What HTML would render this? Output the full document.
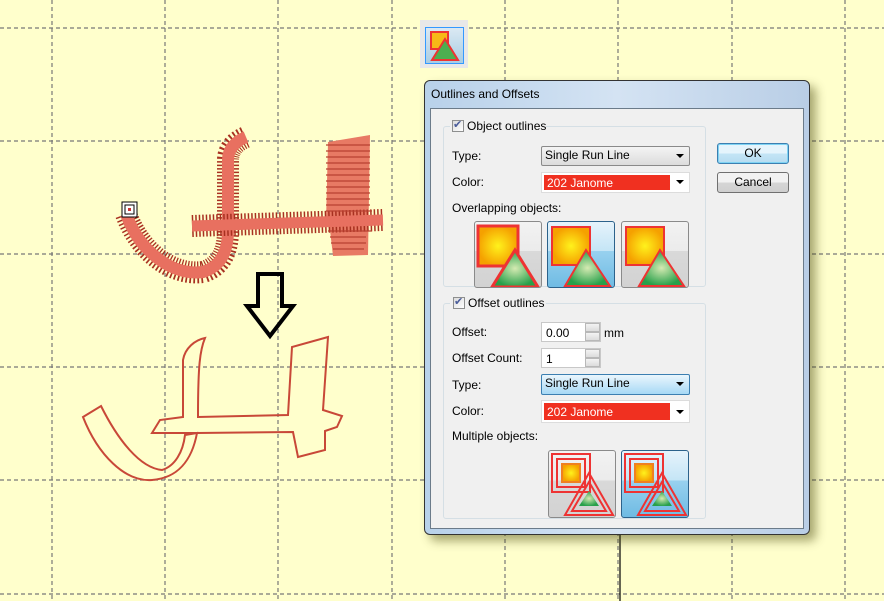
<!DOCTYPE html>
<html><head><meta charset="utf-8"><style>
*{margin:0;padding:0;box-sizing:border-box}
body{width:884px;height:601px;overflow:hidden;background:#ffffcc;position:relative;font-family:"Liberation Sans",sans-serif;font-size:12px;color:#000}
.a{position:absolute}
.lbl{position:absolute;font-size:12px;line-height:14px}
.combo{position:absolute;border:1px solid #8a8a8a;border-radius:2px;background:linear-gradient(#f4f4f4,#dcdcdc);font-size:12px;line-height:17px;padding-left:3px}
.combo.b{background:linear-gradient(#eaf6fd,#a7d9f5);border-color:#3c7fb1}
.arr{position:absolute;right:5px;top:7px;width:0;height:0;border-left:4px solid transparent;border-right:4px solid transparent;border-top:4px solid #000}
.ccombo{position:absolute;background:#fff;border:1px solid #dcdcdc}
.red{position:absolute;left:2px;top:2px;bottom:2px;width:126px;background:#f03020;color:#fff;font-size:12px;line-height:16px;padding-left:3px}
.btn{position:absolute;border:1px solid #707070;border-radius:3px;background:linear-gradient(#f2f2f2 50%,#d6d6d6 50%,#cfcfcf);text-align:center;font-size:12px;line-height:18px}
.ib{position:absolute;border:1px solid #8a8a8a;border-radius:3px;background:linear-gradient(#f2f2f2 0,#ebebeb 45%,#d9d9d9 45%,#d2d2d2);overflow:hidden}
.ib.sel{border-color:#2c628b;background:linear-gradient(#e6f3fb 0,#c4e5f6 45%,#98d1ef 45%,#6fbbe3)}
.spin{position:absolute;background:#fff;border:1px solid #c8c8c8}
.sp{position:absolute;right:0;width:15px;height:50%;border:1px solid #b8b8b8;background:linear-gradient(#f3f3f3,#dcdcdc)}
.chk{position:absolute;width:12px;height:12px;border:1px solid #8e8f8f;background:linear-gradient(135deg,#dcdcdc,#fff)}
</style></head><body>
<svg class="a" style="left:0;top:0" width="884" height="601">
<g stroke="#777" stroke-width="1.2" stroke-dasharray="4 3" fill="none">
<line x1="52" y1="0" x2="52" y2="601"/><line x1="165" y1="0" x2="165" y2="601"/><line x1="278" y1="0" x2="278" y2="601"/><line x1="392" y1="0" x2="392" y2="601"/><line x1="505" y1="0" x2="505" y2="601"/><line x1="618" y1="0" x2="618" y2="601"/><line x1="732" y1="0" x2="732" y2="601"/><line x1="845" y1="0" x2="845" y2="601"/>
<line x1="0" y1="28" x2="884" y2="28"/><line x1="0" y1="141" x2="884" y2="141"/><line x1="0" y1="254" x2="884" y2="254"/><line x1="0" y1="367" x2="884" y2="367"/><line x1="0" y1="480" x2="884" y2="480"/><line x1="0" y1="594" x2="884" y2="594"/>
</g>
<line x1="620" y1="530" x2="620" y2="601" stroke="#000" stroke-width="1.2"/>
<!-- stitched top shape -->
<polygon points="328,142 370,135 368,255 333,256 330,230 326,222" fill="#e87a64"/>
<g fill="none" stroke-linecap="butt">
<path d="M126,214 C140,252 172,276 203,272 C222,266 228,250 228,230 L228,160 C228,150 234,142 246,137" stroke="#a83020" stroke-width="22" stroke-dasharray="1.5 2"/>
<path d="M126,214 C140,252 172,276 203,272 C222,266 228,250 228,230 L228,160 C228,150 234,142 246,137" stroke="#e87060" stroke-width="12"/>
<path d="M192,226 L383,220" stroke="#a83020" stroke-width="22" stroke-dasharray="1.5 2"/>
<path d="M192,226 L383,220" stroke="#e87060" stroke-width="11"/>
</g>
<g stroke="#b84030" stroke-width="1.2">
<path d="M326,145 H370 M326,151 H370 M326,157 H370 M326,163 H370 M326,169 H370 M326,175 H370 M326,181 H370 M326,187 H370 M326,193 H370 M326,199 H370 M326,205 H370 M326,211 H372 M328,231 H372 M330,237 H366 M331,243 H366 M333,249 H364"/>
</g>
<rect x="122" y="202" width="15" height="15" fill="#fff" stroke="#000"/><rect x="125" y="205" width="9" height="9" fill="none" stroke="#000"/><rect x="128" y="208" width="3" height="3" fill="#c33"/>
<!-- arrow -->
<path d="M258,274 H282 V306 H293 L270,336 L247,306 H258 Z" fill="none" stroke="#000" stroke-width="4" stroke-linejoin="miter"/>
<!-- outline shape -->
<path d="M83,417 L101,406 C118,440 140,468 162,470 C175,466 183,452 185,435 L197,433 C192,460 178,478 152,480 C125,482 98,455 83,417 Z M152,433 L160,420 L183,417 L183,360 C185,348 195,340 205,338 C200,350 198,365 198,417 L288,415 L292,347 L328,337 L323,410 L342,416 L337,427 L325,431 L325,450 L298,457 L293,432 L197,433 Z" fill="none" stroke="#c84838" stroke-width="2"/>
</svg>
<!-- small toolbar icon -->
<div class="a" style="left:420px;top:20px;width:48px;height:48px;background:#e8e8e8"></div>
<div class="a" style="left:425px;top:27px;width:39px;height:37px;border:1px solid #3399ff;background:linear-gradient(#dbe9f3,#a9cde3)"></div>
<svg class="a" style="left:428px;top:30px" width="34" height="32"><rect x="3" y="2" width="17" height="17" fill="#f7b917" stroke="#e33" stroke-width="2"/><polygon points="17,9 30,30 4,30" fill="#4caf50" stroke="#e33" stroke-width="2"/></svg>
<!-- dialog -->
<div class="a" style="left:424px;top:80px;width:386px;height:455px;border:1px solid #333;border-radius:6px;background:linear-gradient(90deg,#b8d1ea,#d4e3f3 50%,#b9cee6);box-shadow:6px 6px 10px rgba(60,60,0,.45)"></div>
<div class="lbl" style="left:431px;top:87px">Outlines and Offsets</div>
<div class="a" style="left:430px;top:108px;width:374px;height:421px;background:#f0f0f0;border:1px solid #6b7b8a"></div>
<!-- group 1 -->
<div class="a" style="left:443px;top:126px;width:263px;height:161px;border:1px solid #d5dfe5;border-radius:3px"></div>
<div class="a" style="left:450px;top:118px;width:96px;height:16px;background:#f0f0f0"></div>
<div class="chk" style="left:452px;top:120px"></div><div class="lbl" style="left:453px;top:118px;color:#4a5c9a;font-size:11px">✔</div>
<div class="lbl" style="left:467px;top:119px">Object outlines</div>
<div class="lbl" style="left:452px;top:149px">Type:</div>
<div class="combo" style="left:541px;top:146px;width:149px;height:20px">Single Run Line<div class="arr"></div></div>
<div class="lbl" style="left:452px;top:175px">Color:</div>
<div class="ccombo" style="left:541px;top:172px;width:149px;height:21px"><div class="red">202 Janome</div><div class="arr"></div></div>
<div class="lbl" style="left:452px;top:201px">Overlapping objects:</div>
<div class="ib" style="left:474px;top:221px;width:68px;height:67px"><svg width="68" height="67"><defs><radialGradient id="y"><stop offset="0" stop-color="#fff21c"/><stop offset="1" stop-color="#f5a100"/></radialGradient><radialGradient id="g"><stop offset="0" stop-color="#d5eab2"/><stop offset="1" stop-color="#27a04a"/></radialGradient></defs><rect x="3" y="4" width="40" height="40" fill="url(#y)" stroke="#e33" stroke-width="3"/><polygon points="40,28 63,65 17,65" fill="url(#g)" stroke="#e33" stroke-width="3"/></svg></div>
<div class="ib sel" style="left:547px;top:221px;width:68px;height:67px"><svg width="68" height="67"><rect x="4" y="5" width="38" height="38" fill="url(#y)" stroke="#e33" stroke-width="2"/><polygon points="38,28 62,64 17,64" fill="url(#g)" stroke="#e33" stroke-width="2"/></svg></div>
<div class="ib" style="left:621px;top:221px;width:68px;height:67px"><svg width="68" height="67"><rect x="4" y="5" width="38" height="38" fill="url(#y)" stroke="#e33" stroke-width="2"/><polygon points="38,28 62,64 17,64" fill="url(#g)" stroke="#e33" stroke-width="2"/></svg></div>
<!-- OK / Cancel -->
<div class="btn" style="left:717px;top:143px;width:72px;height:21px;border-color:#3c7fb1;background:linear-gradient(#e5f4fc 50%,#c4e5f6 50%,#b6dcf0);box-shadow:0 0 0 1px #7fd3f3 inset">OK</div>
<div class="btn" style="left:717px;top:172px;width:72px;height:21px">Cancel</div>
<!-- group 2 -->
<div class="a" style="left:443px;top:303px;width:263px;height:216px;border:1px solid #d5dfe5;border-radius:3px"></div>
<div class="a" style="left:450px;top:295px;width:96px;height:16px;background:#f0f0f0"></div>
<div class="chk" style="left:453px;top:297px"></div><div class="lbl" style="left:454px;top:295px;color:#4a5c9a;font-size:11px">✔</div>
<div class="lbl" style="left:468px;top:296px">Offset outlines</div>
<div class="lbl" style="left:452px;top:325px">Offset:</div>
<div class="spin" style="left:541px;top:322px;width:60px;height:20px"><div class="lbl" style="left:4px;top:3px">0.00</div><div class="sp" style="top:0"></div><div class="sp" style="bottom:0"></div></div>
<div class="lbl" style="left:604px;top:326px">mm</div>
<div class="lbl" style="left:452px;top:351px">Offset Count:</div>
<div class="spin" style="left:541px;top:348px;width:60px;height:20px"><div class="lbl" style="left:4px;top:3px">1</div><div class="sp" style="top:0"></div><div class="sp" style="bottom:0"></div></div>
<div class="lbl" style="left:452px;top:378px">Type:</div>
<div class="combo b" style="left:541px;top:374px;width:149px;height:21px">Single Run Line<div class="arr"></div></div>
<div class="lbl" style="left:452px;top:404px">Color:</div>
<div class="ccombo" style="left:541px;top:400px;width:149px;height:23px"><div class="red" style="line-height:18px">202 Janome</div><div class="arr" style="top:9px"></div></div>
<div class="lbl" style="left:452px;top:429px">Multiple objects:</div>
<div class="ib" style="left:548px;top:450px;width:68px;height:68px"><svg width="68" height="68"><g fill="none" stroke="#e33" stroke-width="2"><rect x="3" y="3" width="38" height="38"/><rect x="8" y="8" width="28" height="28"/><polygon points="40,22 64,64 16,64"/><polygon points="40,31 57,60 23,60"/></g><rect x="13" y="13" width="18" height="18" fill="url(#y)" stroke="#f08020" stroke-width="2"/><polygon points="40,40 50,55 30,55" fill="url(#g)"/></svg></div>
<div class="ib sel" style="left:621px;top:450px;width:68px;height:68px"><svg width="68" height="68"><g fill="none" stroke="#e33" stroke-width="2"><rect x="3" y="3" width="38" height="38"/><rect x="8" y="8" width="28" height="28"/><polygon points="40,22 64,64 16,64"/><polygon points="40,31 57,60 23,60"/></g><rect x="13" y="13" width="18" height="18" fill="url(#y)" stroke="#f08020" stroke-width="2"/><polygon points="40,40 50,55 30,55" fill="url(#g)"/></svg></div>
</body></html>
